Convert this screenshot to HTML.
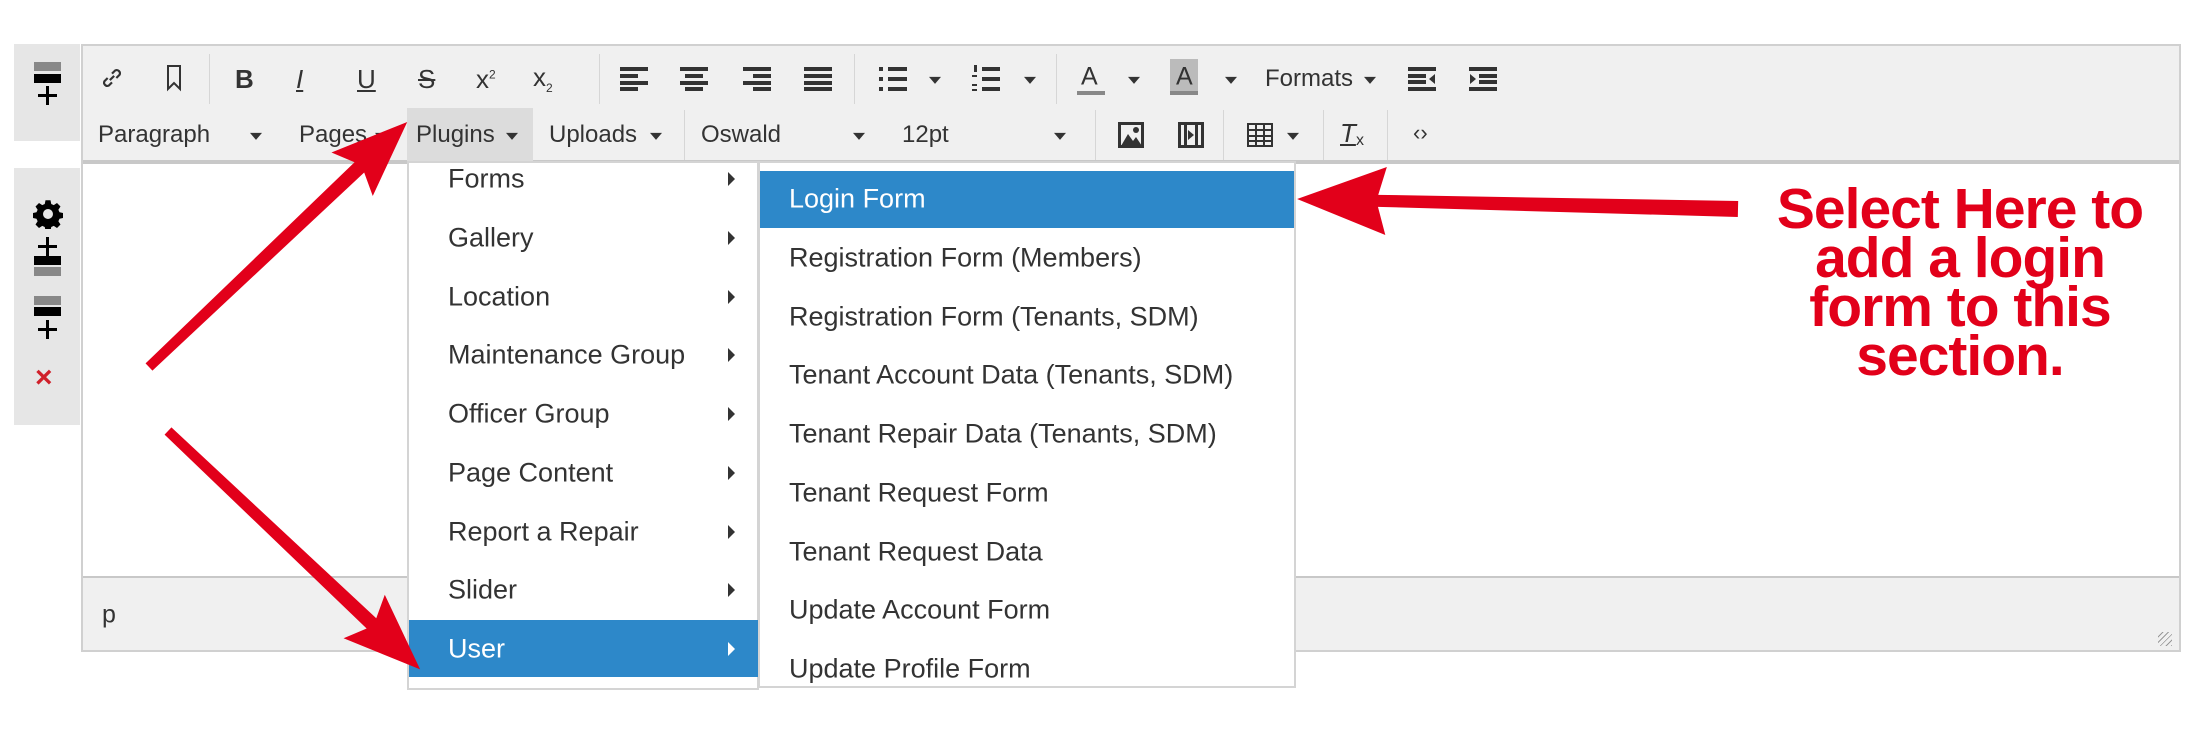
<!DOCTYPE html>
<html><head><meta charset="utf-8"><style>
*{margin:0;padding:0;box-sizing:border-box}
body{width:2198px;height:738px;background:#fff;position:relative;overflow:hidden;font-family:"Liberation Sans",Arial,sans-serif;color:#333}
.a{position:absolute}
.t{position:absolute;font-size:24px;color:#333;line-height:1;transform:translateY(-50%)}
.dd{position:absolute;width:0;height:0;border-left:6px solid transparent;border-right:6px solid transparent;border-top:7px solid #333;transform:translate(-50%,-30%)}
.sep{position:absolute;width:1px;background:#d6d6d6}
.mi{position:absolute;font-size:27px;color:#333;line-height:1;transform:translateY(-50%)}
.car{position:absolute;width:0;height:0;border-top:7px solid transparent;border-bottom:7px solid transparent;border-left:7px solid #333;transform:translateY(-50%)}
.bar{position:absolute;height:9px}
</style></head><body>
<div class="a" style="left:14px;top:44px;width:66px;height:97px;background:#e6e6e6"></div>
<div class="bar" style="left:34px;top:62px;width:27px;background:#888"></div>
<div class="bar" style="left:34px;top:74px;width:27px;background:#000"></div>
<div class="a" style="left:46px;top:86px;width:3px;height:19px;background:#000"></div>
<div class="a" style="left:38px;top:94px;width:19px;height:3px;background:#000"></div>

<div class="a" style="left:14px;top:168px;width:66px;height:257px;background:#e6e6e6"></div>
<svg class="a" style="left:33px;top:199px" width="30" height="30" viewBox="0 0 24 24"><path fill="#000" d="M10 1h4l.6 3 2 .9 2.6-1.7 2.8 2.8-1.7 2.6.9 2 3 .6v4l-3 .6-.9 2 1.7 2.6-2.8 2.8-2.6-1.7-2 .9-.6 3h-4l-.6-3-2-.9-2.6 1.7-2.8-2.8 1.7-2.6-.9-2-3-.6v-4l3-.6.9-2-1.7-2.6 2.8-2.8 2.6 1.7 2-.9zM12 8a4 4 0 100 8 4 4 0 000-8z"/></svg>
<div class="a" style="left:46px;top:237px;width:3px;height:19px;background:#000"></div>
<div class="a" style="left:38px;top:245px;width:19px;height:3px;background:#000"></div>
<div class="bar" style="left:34px;top:256px;width:27px;background:#000"></div>
<div class="bar" style="left:34px;top:267px;width:27px;background:#888"></div>
<div class="bar" style="left:34px;top:296px;width:27px;background:#888"></div>
<div class="bar" style="left:34px;top:307px;width:27px;background:#000"></div>
<div class="a" style="left:46px;top:320px;width:3px;height:19px;background:#000"></div>
<div class="a" style="left:38px;top:328px;width:19px;height:3px;background:#000"></div>
<div class="a" style="left:35px;top:363px;font-size:30px;font-weight:bold;color:#d0202a;line-height:1">×</div>

<div class="a" style="left:81px;top:44px;width:2100px;height:608px;border:2px solid #d0d0d0;background:#fff"></div>
<div class="a" style="left:83px;top:46px;width:2096px;height:118px;background:#f0f0f0;border-bottom:4px solid #c8c8c8"></div>
<div class="a" style="left:83px;top:576px;width:2096px;height:74px;background:#f0f0f0;border-top:2px solid #c8c8c8"></div>
<div class="t" style="left:102px;top:615px;font-size:25px">p</div>
<div class="a" style="left:2158px;top:632px;width:14px;height:14px;background:repeating-linear-gradient(135deg,transparent 0 3px,#999 3px 4px)"></div>

<svg class="a" style="left:99px;top:65px" width="26" height="26" viewBox="0 0 24 24" fill="none" stroke="#333" stroke-width="2"><path d="M10 14l4-4M8 12l-3 3a3 3 0 004 4l3-3M16 12l3-3a3 3 0 00-4-4l-3 3"/></svg>
<svg class="a" style="left:164px;top:64px" width="20" height="28" viewBox="0 0 20 28" fill="none" stroke="#333" stroke-width="2"><path d="M4 2h12v23l-6-6-6 6z"/></svg>
<div class="sep" style="left:209px;top:54px;height:50px"></div>
<div class="t" style="left:235px;top:79px;font-weight:bold;font-size:26px">B</div>
<div class="t" style="left:296px;top:79px;font-style:italic;font-size:26px;text-decoration:underline">I</div>
<div class="t" style="left:357px;top:79px;font-size:26px;text-decoration:underline">U</div>
<div class="t" style="left:418px;top:79px;font-size:26px;text-decoration:line-through">S</div>
<div class="t" style="left:476px;top:79px;font-size:26px">x<sup style="font-size:12px">2</sup></div>
<div class="t" style="left:533px;top:79px;font-size:26px">x<sub style="font-size:12px">2</sub></div>
<div class="sep" style="left:599px;top:54px;height:50px"></div>
<svg class="a" style="left:620px;top:67px" width="28" height="24"><path fill="#333" d="M0 0h28v4H0zM0 7h18v4H0zM0 14h28v4H0zM0 20h18v4H0z"/></svg>
<svg class="a" style="left:680px;top:67px" width="28" height="24"><path fill="#333" d="M0 0h28v4H0zM5 7h18v4H5zM0 14h28v4H0zM5 20h18v4H5z"/></svg>
<svg class="a" style="left:743px;top:67px" width="28" height="24"><path fill="#333" d="M0 0h28v4H0zM10 7h18v4H10zM0 14h28v4H0zM10 20h18v4H10z"/></svg>
<svg class="a" style="left:804px;top:67px" width="28" height="24"><path fill="#333" d="M0 0h28v4H0zM0 7h28v4H0zM0 14h28v4H0zM0 20h28v4H0z"/></svg>
<div class="sep" style="left:854px;top:54px;height:50px"></div>
<svg class="a" style="left:879px;top:67px" width="28" height="24"><path fill="#333" d="M0 0h4v4H0zM9 0h19v4H9zM0 10h4v4H0zM9 10h19v4H9zM0 20h4v4H0zM9 20h19v4H9z"/></svg>
<div class="dd" style="left:935px;top:79px"></div>
<svg class="a" style="left:972px;top:65px" width="28" height="28"><path fill="#333" d="M2 0h3v7H2zM0 10h5v2H0zM0 19h5v2H0zM0 24h5v2H0zM10 2h18v4H10zM10 12h18v4H10zM10 22h18v4H10z"/></svg>
<div class="dd" style="left:1030px;top:79px"></div>
<div class="sep" style="left:1056px;top:54px;height:50px"></div>
<div class="t" style="left:1081px;top:77px;font-size:25px">A</div>
<div class="a" style="left:1077px;top:91px;width:28px;height:4px;background:#888"></div>
<div class="dd" style="left:1134px;top:79px"></div>
<div class="a" style="left:1170px;top:59px;width:28px;height:32px;background:#bbb"></div>
<div class="t" style="left:1176px;top:77px;font-size:25px">A</div>
<div class="a" style="left:1170px;top:91px;width:28px;height:4px;background:#888"></div>
<div class="dd" style="left:1231px;top:79px"></div>
<div class="t" style="left:1265px;top:79px">Formats</div>
<div class="dd" style="left:1370px;top:79px"></div>
<svg class="a" style="left:1408px;top:67px" width="28" height="24"><path fill="#333" d="M0 0h28v4H0zM0 7h18v4H0zM0 13h18v4H0zM0 20h28v4H0zM27 7l-6 5 6 5z"/></svg>
<svg class="a" style="left:1469px;top:67px" width="28" height="24"><path fill="#333" d="M0 0h28v4H0zM10 7h18v4H10zM10 13h18v4H10zM0 20h28v4H0zM1 7l6 5-6 5z"/></svg>

<div class="a" style="left:407px;top:108px;width:126px;height:53px;background:#dcdcdc"></div>
<div class="t" style="left:98px;top:135px">Paragraph</div><div class="dd" style="left:256px;top:135px"></div>
<div class="t" style="left:299px;top:135px">Pages</div><div class="dd" style="left:381px;top:135px"></div>
<div class="t" style="left:416px;top:135px">Plugins</div><div class="dd" style="left:512px;top:135px"></div>
<div class="t" style="left:549px;top:135px">Uploads</div><div class="dd" style="left:656px;top:135px"></div>
<div class="sep" style="left:684px;top:110px;height:50px"></div>
<div class="t" style="left:701px;top:135px">Oswald</div><div class="dd" style="left:859px;top:135px"></div>
<div class="t" style="left:902px;top:135px">12pt</div><div class="dd" style="left:1060px;top:135px"></div>
<div class="sep" style="left:1095px;top:110px;height:50px"></div>
<svg class="a" style="left:1118px;top:122px" width="26" height="26"><rect x="1.5" y="1.5" width="23" height="23" fill="none" stroke="#333" stroke-width="3"/><path fill="#333" d="M3 24l7-12 5 7 3-4 6 9z"/><circle cx="18" cy="8" r="3" fill="#333"/></svg>
<svg class="a" style="left:1178px;top:122px" width="26" height="26"><rect x="1.5" y="1.5" width="23" height="23" fill="none" stroke="#333" stroke-width="3"/><path fill="#333" d="M6 2h3v22H6zM17 2h3v22h-3zM10 8l6 5-6 5z"/></svg>
<div class="sep" style="left:1223px;top:110px;height:50px"></div>
<svg class="a" style="left:1247px;top:123px" width="26" height="24"><rect x="1" y="1" width="24" height="22" fill="none" stroke="#333" stroke-width="2"/><path stroke="#333" stroke-width="2" d="M1 7h24M1 13h24M1 18h24M9 1v22M17 1v22"/></svg>
<div class="dd" style="left:1293px;top:135px"></div>
<div class="sep" style="left:1323px;top:110px;height:50px"></div>
<div class="t" style="left:1340px;top:133px;font-size:26px;font-style:italic;text-decoration:underline">T</div>
<div class="t" style="left:1356px;top:141px;font-size:16px">x</div>
<div class="sep" style="left:1387px;top:110px;height:50px"></div>
<div class="t" style="left:1413px;top:133px;font-size:22px">‹›</div>

<div class="a" style="left:407px;top:161px;width:352px;height:529px;background:#fff;border:2px solid #d4d4d4"></div>
<div class="a" style="left:409px;top:620px;width:349px;height:57px;background:#2d88c9"></div>
<div class="mi" style="left:448px;top:179px">Forms</div><div class="car" style="left:728px;top:179px"></div>
<div class="mi" style="left:448px;top:238px">Gallery</div><div class="car" style="left:728px;top:238px"></div>
<div class="mi" style="left:448px;top:297px">Location</div><div class="car" style="left:728px;top:297px"></div>
<div class="mi" style="left:448px;top:355px">Maintenance Group</div><div class="car" style="left:728px;top:355px"></div>
<div class="mi" style="left:448px;top:414px">Officer Group</div><div class="car" style="left:728px;top:414px"></div>
<div class="mi" style="left:448px;top:473px">Page Content</div><div class="car" style="left:728px;top:473px"></div>
<div class="mi" style="left:448px;top:532px">Report a Repair</div><div class="car" style="left:728px;top:532px"></div>
<div class="mi" style="left:448px;top:590px">Slider</div><div class="car" style="left:728px;top:590px"></div>
<div class="mi" style="left:448px;top:649px;color:#fff">User</div><div class="car" style="left:728px;top:649px;border-left-color:#fff"></div>

<div class="a" style="left:758px;top:161px;width:538px;height:527px;background:#fff;border:2px solid #d4d4d4"></div>
<div class="a" style="left:760px;top:171px;width:534px;height:57px;background:#2d88c9"></div>
<div class="mi" style="left:789px;top:199px;color:#fff">Login Form</div>
<div class="mi" style="left:789px;top:258px">Registration Form (Members)</div>
<div class="mi" style="left:789px;top:317px">Registration Form (Tenants, SDM)</div>
<div class="mi" style="left:789px;top:375px">Tenant Account Data (Tenants, SDM)</div>
<div class="mi" style="left:789px;top:434px">Tenant Repair Data (Tenants, SDM)</div>
<div class="mi" style="left:789px;top:493px">Tenant Request Form</div>
<div class="mi" style="left:789px;top:552px">Tenant Request Data</div>
<div class="mi" style="left:789px;top:610px">Update Account Form</div>
<div class="mi" style="left:789px;top:669px">Update Profile Form</div>

<div class="a" style="left:1720px;top:185px;width:480px;text-align:center;color:#e2001a;font-weight:bold;font-size:57px;line-height:49px;letter-spacing:-1px">Select Here to<br>add a login<br>form to this<br>section.</div>

<svg class="a" style="left:0;top:0" width="2198" height="738">
<g fill="#e2001a">
<g transform="translate(149,367) rotate(-43.5)"><path d="M0 -5L290 -7L280 -30L356 0L280 30L290 7L0 5z"/></g>
<g transform="translate(168,431) rotate(43.4)"><path d="M0 -5L280 -7L270 -30L347 0L270 30L280 7L0 5z"/></g>
<g transform="translate(1738,209) rotate(181.3)"><path d="M0 -8L360 -6L352 -34L441 0L352 34L360 6L0 8z"/></g>
</g></svg>
</body></html>
